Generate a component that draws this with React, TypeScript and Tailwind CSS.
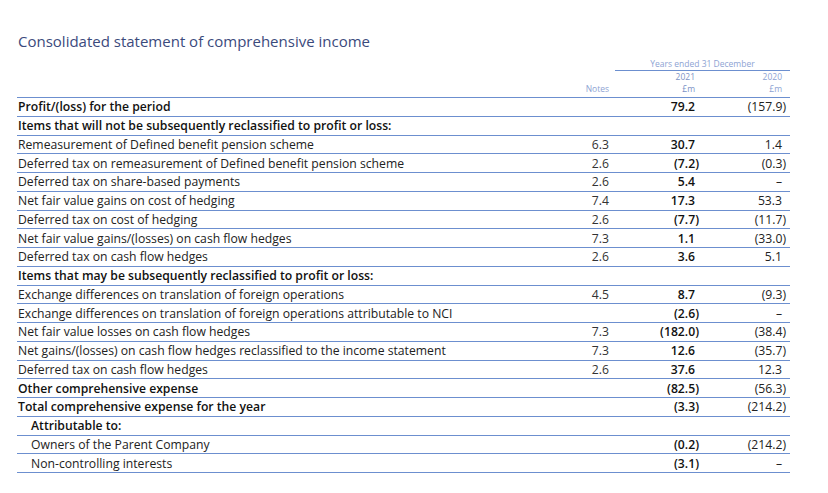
import React from "react";

type Row = {
  label: string;
  note?: string;
  a?: string;
  b?: string;
  bold?: boolean;
  indent?: boolean;
};

const rows: Row[] = [
  { label: "Profit/(loss) for the period", a: "79.2", b: "(157.9)", bold: true },
  { label: "Items that will not be subsequently reclassified to profit or loss:", bold: true },
  { label: "Remeasurement of Defined benefit pension scheme", note: "6.3", a: "30.7", b: "1.4" },
  { label: "Deferred tax on remeasurement of Defined benefit pension scheme", note: "2.6", a: "(7.2)", b: "(0.3)" },
  { label: "Deferred tax on share-based payments", note: "2.6", a: "5.4", b: "–" },
  { label: "Net fair value gains on cost of hedging", note: "7.4", a: "17.3", b: "53.3" },
  { label: "Deferred tax on cost of hedging", note: "2.6", a: "(7.7)", b: "(11.7)" },
  { label: "Net fair value gains/(losses) on cash flow hedges", note: "7.3", a: "1.1", b: "(33.0)" },
  { label: "Deferred tax on cash flow hedges", note: "2.6", a: "3.6", b: "5.1" },
  { label: "Items that may be subsequently reclassified to profit or loss:", bold: true },
  { label: "Exchange differences on translation of foreign operations", note: "4.5", a: "8.7", b: "(9.3)" },
  { label: "Exchange differences on translation of foreign operations attributable to NCI", a: "(2.6)", b: "–" },
  { label: "Net fair value losses on cash flow hedges", note: "7.3", a: "(182.0)", b: "(38.4)" },
  { label: "Net gains/(losses) on cash flow hedges reclassified to the income statement", note: "7.3", a: "12.6", b: "(35.7)" },
  { label: "Deferred tax on cash flow hedges", note: "2.6", a: "37.6", b: "12.3" },
  { label: "Other comprehensive expense", a: "(82.5)", b: "(56.3)", bold: true },
  { label: "Total comprehensive expense for the year", a: "(3.3)", b: "(214.2)", bold: true },
  { label: "Attributable to:", bold: true, indent: true },
  { label: "Owners of the Parent Company", a: "(0.2)", b: "(214.2)", indent: true },
  { label: "Non-controlling interests", a: "(3.1)", b: "–", indent: true },
];

function Num({ v }: { v?: string }) {
  if (!v) return null;
  if (v.startsWith("(") && v.endsWith(")")) {
    return (
      <span>
        {v.slice(0, -1)}
        <span className="-mr-[4px]">)</span>
      </span>
    );
  }
  return <span>{v}</span>;
}

export default function App() {
  return (
    <div
      className="w-[828px] h-[493px] bg-white pt-[31px] text-[#1d1d1f]"
      style={{ fontFamily: '"Open Sans", "Liberation Sans", sans-serif' }}
    >
      <h1 className="pl-[18px] text-[15px] leading-[20px] text-[#3b4a7c]">
        Consolidated statement of comprehensive income
      </h1>
      <div className="ml-[17px] w-[773px] mt-[6px]">
        <div className="grid grid-cols-[1fr_60px_86px_87px_8px]">
          <div className="col-start-3 col-span-3 ml-[6px] border-b border-[#6c8fcf] text-center text-[8.5px] leading-[13px] text-[#8ea3d3]">
            Years ended 31 December
          </div>
        </div>
        <div className="grid grid-cols-[1fr_60px_86px_87px_8px] h-[26px] text-[8.5px] leading-[11.5px] text-[#8ea3d3]">
          <div />
          <div className="text-right pt-[11.5px]">Notes</div>
          <div className="flex flex-col items-end text-[#7d93c6]">
            <div className="h-[11.5px]">2021</div>
            <div className="h-[11.5px]">£m</div>
          </div>
          <div className="flex flex-col items-end">
            <div className="h-[11.5px]">2020</div>
            <div className="h-[11.5px]">£m</div>
          </div>
          <div />
        </div>
        <div className="border-t border-[#6c8fcf]">
          {rows.map((r, i) => (
            <div
              key={i}
              className="grid grid-cols-[1fr_60px_86px_87px_8px] h-[18.75px] border-b border-[#6c8fcf] items-center text-[12.2px] leading-[17px]"
            >
              <div
                className={
                  (r.indent ? "pl-[14px] " : "pl-[1px] ") +
                  (r.bold ? "font-semibold text-[#111]" : "text-[#222]") +
                  " whitespace-nowrap"
                }
              >
                {r.label}
              </div>
              <div className="text-right text-[#333]">{r.note}</div>
              <div className="text-right font-semibold text-[#111]">
                <Num v={r.a} />
              </div>
              <div className="text-right text-[#222]">
                <Num v={r.b} />
              </div>
              <div />
            </div>
          ))}
        </div>
      </div>
    </div>
  );
}
